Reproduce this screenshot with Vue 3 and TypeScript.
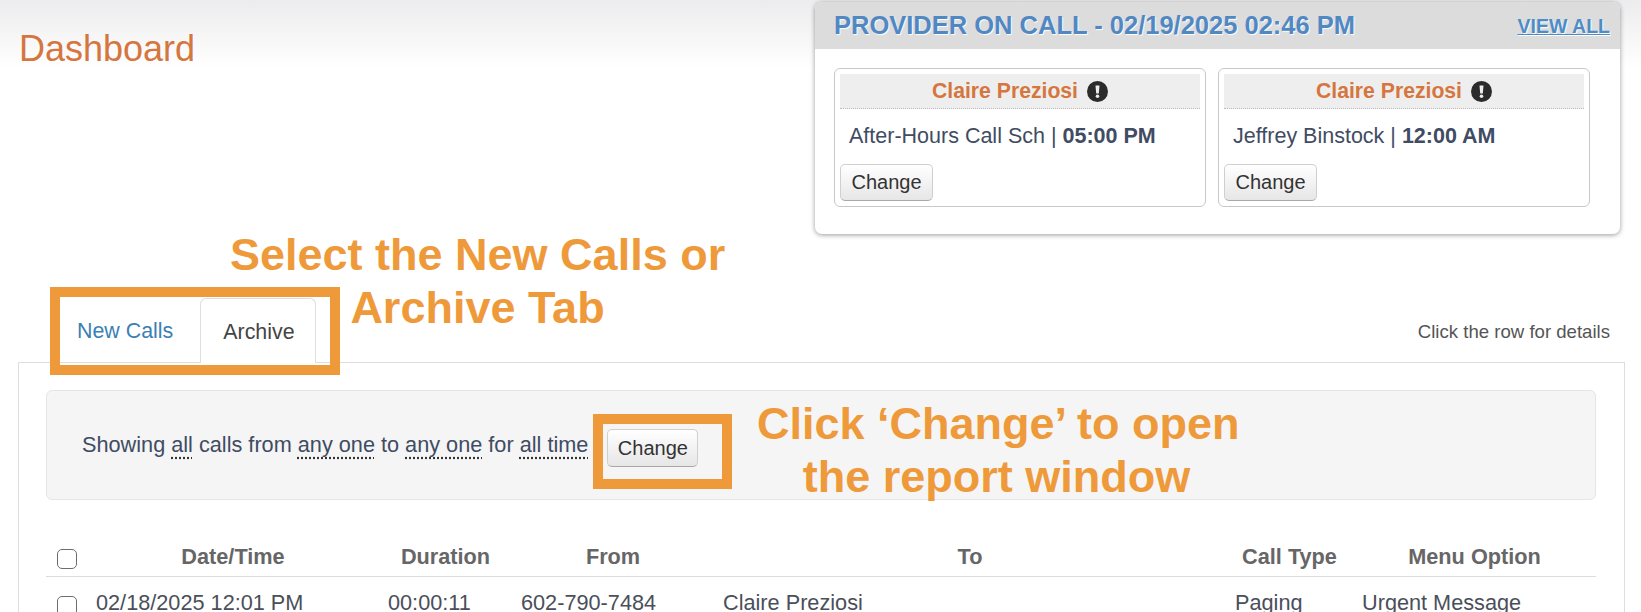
<script setup lang="ts">
interface Provider {
  name: string;
  detail: string;
  time: string;
}

const providers: Provider[] = [
  { name: "Claire Preziosi", detail: "After-Hours Call Sch", time: "05:00 PM" },
  { name: "Claire Preziosi", detail: "Jeffrey Binstock", time: "12:00 AM" },
];

const columns = ["Date/Time", "Duration", "From", "To", "Call Type", "Menu Option"];
const cells = ["02/18/2025 12:01 PM", "00:00:11", "602-790-7484", "Claire Preziosi", "Paging", "Urgent Message"];
</script>

<template>
  <div class="page">
    <header class="top">
      <h1 class="title">Dashboard</h1>
      <section class="oncall">
        <div class="oncall-head">
          <span class="oncall-title">PROVIDER ON CALL - 02/19/2025 02:46 PM</span>
          <a class="view-all">VIEW ALL</a>
        </div>
        <div class="oncall-body">
          <div class="provider" v-for="(p, i) in providers" :key="i">
            <div class="provider-name">
              {{ p.name }}
              <svg class="alert" viewBox="0 0 21 21" width="21" height="21">
                <circle cx="10.5" cy="10.5" r="10.5" fill="#2b2b2b" />
                <path d="M8.5 4.4h4l-.7 8.2H9.2z" fill="#eee" />
                <circle cx="10.5" cy="15.3" r="1.8" fill="#eee" />
              </svg>
            </div>
            <div class="provider-line">{{ p.detail }} | <b>{{ p.time }}</b></div>
            <button class="btn">Change</button>
          </div>
        </div>
      </section>
    </header>

    <div class="tabs-row">
      <nav class="tabs">
        <a class="tab">New Calls</a>
        <a class="tab active">Archive</a>
      </nav>
      <span class="hint">Click the row for details</span>
    </div>

    <main class="panel">
      <div class="well">
        <span class="filter">
          Showing <u>all</u> calls from <u>any one</u> to <u>any one</u> for <u>all time</u>
        </span>
        <button class="btn well-btn">Change</button>
      </div>
      <div class="calls">
        <div class="calls-row calls-head">
          <span class="check-cell"><i class="check"></i></span>
          <span v-for="c in columns" :key="c">{{ c }}</span>
        </div>
        <div class="calls-row calls-body">
          <span class="check-cell"><i class="check"></i></span>
          <span v-for="c in cells" :key="c">{{ c }}</span>
        </div>
      </div>
    </main>

    <div class="mark mark-tabs"></div>
    <div class="mark mark-change"></div>
    <p class="note note-tabs">Select the New Calls or<br />Archive Tab</p>
    <p class="note note-change">Click ‘Change’ to open<br />the report window</p>
  </div>
</template>

<style>
html,
body {
  margin: 0;
  background: #fff;
  overflow: hidden;
}
</style>

<style scoped>
.page {
  position: relative;
  height: 612px;
  overflow: hidden;
  font-family: "Liberation Sans", Arial, sans-serif;
  font-size: 20px;
  color: #3f4c63;
  background: linear-gradient(#ececee, #fff 68px) no-repeat;
}

.top {
  display: flex;
  justify-content: space-between;
  align-items: flex-start;
  padding: 2px 21px 0 19px;
}

.title {
  margin: 26px 0 0;
  font-size: 36px;
  line-height: 42px;
  font-weight: 400;
  color: #d5763f;
}

.oncall {
  width: 805px;
  height: 232px;
  box-sizing: border-box;
  background: #fff;
  border-radius: 7px;
  box-shadow: 0 1px 5px rgba(0, 0, 0, 0.4);
  overflow: hidden;
}

.oncall-head {
  display: flex;
  justify-content: space-between;
  align-items: center;
  height: 47px;
  padding: 0 10px 0 19px;
  background: #dcdcdc;
}

.oncall-title {
  font-size: 25.5px;
  font-weight: 700;
  color: #5288c2;
  text-shadow: 1px 1px 1px #fff;
}

.view-all {
  margin-top: 2px;
  font-size: 19.5px;
  font-weight: 700;
  color: #4f8cc4;
  text-decoration: underline;
  text-shadow: 1px 1px 1px #fff;
}

.oncall-body {
  display: flex;
  gap: 12px;
  padding: 19px 19px 0;
}

.provider {
  width: 372px;
  height: 139px;
  box-sizing: border-box;
  padding: 5px;
  border: 1px solid #c8c8c8;
  border-radius: 6px;
}

.provider-name {
  display: flex;
  justify-content: center;
  align-items: center;
  gap: 9px;
  height: 34px;
  font-size: 21.2px;
  font-weight: 700;
  color: #d5763f;
  background: #eeeeee;
  border-bottom: 1px dotted #bbb;
}

.provider-line {
  margin: 15px 0 0 9px;
  font-size: 21.5px;
  line-height: 24px;
  height: 40px;
}

.btn {
  display: block;
  flex: none;
  width: 93px;
  height: 37px;
  padding: 0;
  font: inherit;
  color: #333;
  background: linear-gradient(#fff, #e6e6e6);
  border: 1px solid #cfcfcf;
  border-bottom-color: #a8a8a8;
  border-radius: 5px;
}

.tabs-row {
  display: flex;
  justify-content: space-between;
  align-items: flex-end;
  height: 64px;
  margin-top: 64px;
  padding: 0 31px 0 58px;
}

.tabs {
  display: flex;
  position: relative;
  z-index: 1;
  margin-bottom: -1px;
  font-size: 21.4px;
}

.tab {
  display: block;
  height: 65px;
  box-sizing: border-box;
  padding: 0 27px 0 19px;
  line-height: 67px;
  color: #3a7fb5;
}

.tab.active {
  width: 116px;
  padding: 0 0 0 22px;
  color: #444;
  background: #fff;
  border: 1px solid #dedede;
  border-bottom: 0;
  border-radius: 6px 6px 0 0;
}

.hint {
  font-size: 18.6px;
  line-height: 40px;
  padding-bottom: 10px;
  color: #555;
}

.panel {
  box-sizing: border-box;
  height: 250px;
  margin: 0 16px 0 18px;
  padding: 27px 28px 0 27px;
  border: 1px solid #dedede;
  border-bottom: 0;
}

.well {
  display: flex;
  align-items: center;
  gap: 19px;
  height: 110px;
  box-sizing: border-box;
  padding: 0 0 0 35px;
  background: #f5f5f5;
  border: 1px solid #e5e5e5;
  border-radius: 6px;
}

.filter {
  font-size: 21.7px;
  white-space: nowrap;
}

.filter u {
  text-decoration: underline dotted #333;
  text-underline-offset: 5px;
}

.well-btn {
  width: 91px;
  height: 38px;
  margin-top: 6px;
}

.calls {
  margin-top: 40px;
}

.calls-row {
  display: grid;
  grid-template-columns: 41px 292px 133px 202px 512px 127px 243px;
  align-items: center;
  height: 36px;
  font-size: 21.7px;
}

.calls-row > span {
  padding: 0 9px;
  white-space: nowrap;
}

.calls-head {
  font-weight: 700;
  color: #666;
  text-align: center;
  border-bottom: 1px solid #ddd;
}

.calls-head > span {
  padding-bottom: 2px;
}

.calls-body {
  height: 52px;
  color: #4a4f5a;
  text-align: left;
}

.calls-row > .check-cell {
  display: flex;
  padding: 2px 0 0 11px;
}

.calls-body > .check-cell {
  padding-top: 6px;
}

.check {
  display: block;
  width: 18px;
  height: 18px;
  border: 1.5px solid #6d6d6d;
  border-radius: 5px;
  background: #fff;
}

.mark {
  position: absolute;
  box-sizing: border-box;
  border: 10px solid #ee9a3a;
  z-index: 2;
}

.mark-tabs {
  left: 50px;
  top: 287px;
  width: 290px;
  height: 88px;
}

.mark-change {
  left: 593px;
  top: 414px;
  width: 139px;
  height: 75px;
}

.note {
  position: absolute;
  z-index: 3;
  margin: 0;
  font-size: 45px;
  line-height: 53px;
  font-weight: 700;
  text-align: center;
  color: #ee9a3a;
  white-space: nowrap;
}

.note-tabs {
  left: 230px;
  top: 228px;
  width: 495px;
}

.note-change {
  left: 757px;
  top: 397px;
  width: 479px;
}
</style>
